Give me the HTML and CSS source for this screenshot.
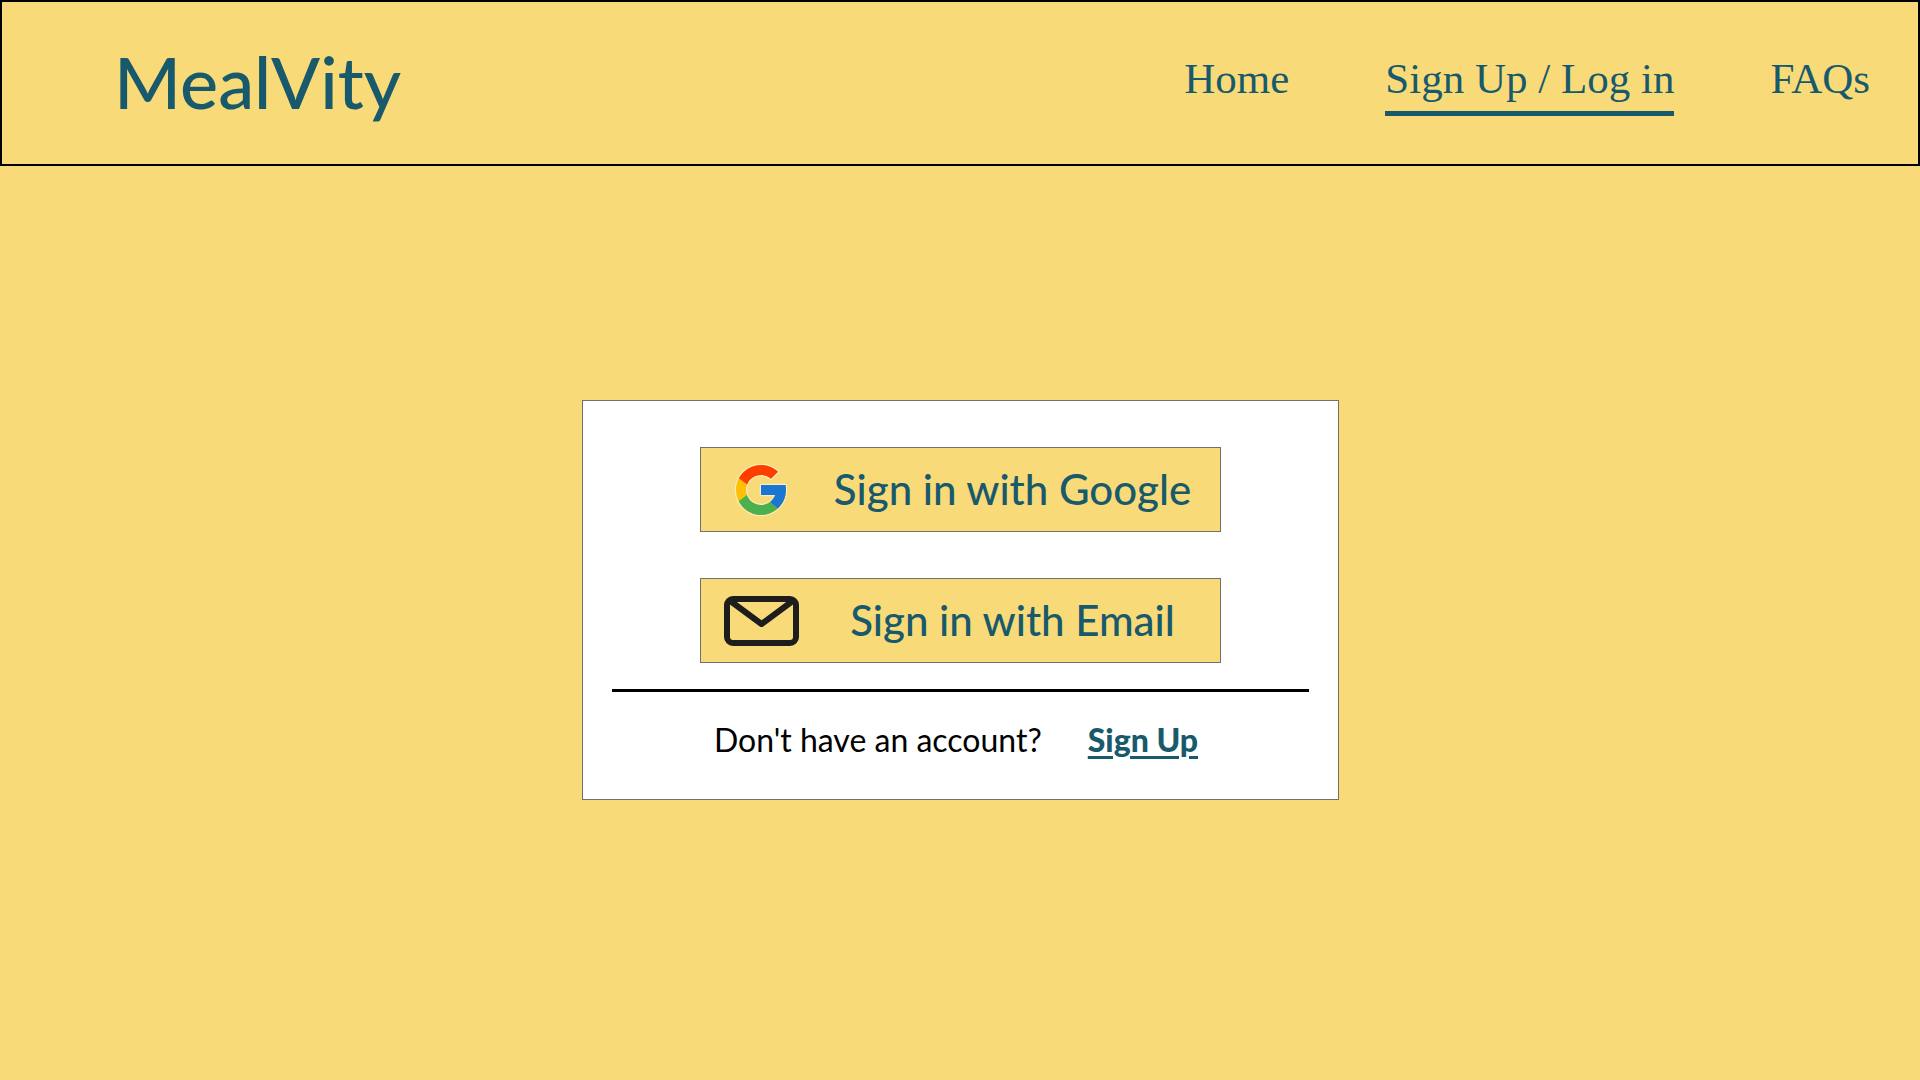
FILE: index.html
```html
<!DOCTYPE html>
<html lang="en">
<head>
  <meta charset="utf-8">
  <meta name="viewport" content="width=device-width, initial-scale=1">
  <title>MealVity - Log in</title>
  <link rel="stylesheet" href="styles.css">
</head>
<body>
  <header class="site-header">
    <a class="logo" href="#">MealVity</a>
    <nav class="site-nav" aria-label="Main">
      <a class="nav-link" href="#">Home</a>
      <a class="nav-link nav-link-current" href="#" aria-current="page">Sign Up / Log in</a>
      <a class="nav-link" href="#">FAQs</a>
    </nav>
  </header>

  <main class="page">
    <section class="card" aria-label="Sign in">
      <div class="providers">
        <button class="provider" type="button">
          <svg class="icon-google" viewBox="0 0 48 48" aria-hidden="true">
            <g class="google-edge">
              <path d="M43.611 20.083H24v8h11.303c-1.649 4.657-6.08 8-11.303 8-6.627 0-12-5.373-12-12s5.373-12 12-12c3.059 0 5.842 1.154 7.961 3.039l5.657-5.657C34.046 6.053 29.268 4 24 4 12.955 4 4 12.955 4 24s8.955 20 20 20 20-8.955 20-20c0-1.341-.138-2.65-.389-3.917z"/>
            </g>
            <path fill="#ffc107" d="M43.611 20.083H42V20H24v8h11.303c-1.649 4.657-6.08 8-11.303 8-6.627 0-12-5.373-12-12s5.373-12 12-12c3.059 0 5.842 1.154 7.961 3.039l5.657-5.657C34.046 6.053 29.268 4 24 4 12.955 4 4 12.955 4 24s8.955 20 20 20 20-8.955 20-20c0-1.341-.138-2.65-.389-3.917z"/>
            <path fill="#ff3d00" d="M6.306 14.691l6.571 4.819C14.655 15.108 18.961 12 24 12c3.059 0 5.842 1.154 7.961 3.039l5.657-5.657C34.046 6.053 29.268 4 24 4 16.318 4 9.656 8.337 6.306 14.691z"/>
            <path fill="#4caf50" d="M24 44c5.166 0 9.86-1.977 13.409-5.192l-6.19-5.238C29.211 35.091 26.715 36 24 36c-5.202 0-9.619-3.317-11.283-7.946l-6.522 5.025C9.505 39.556 16.227 44 24 44z"/>
            <path fill="#1976d2" d="M43.611 20.083H42V20H24v8h11.303c-.792 2.237-2.231 4.166-4.087 5.571l6.193 5.238C36.971 39.205 44 34 44 24c0-1.341-.138-2.65-.389-3.917z"/>
          </svg>
          <span>Sign in with Google</span>
        </button>
        <button class="provider" type="button">
          <svg class="icon-mail" viewBox="0 0 75 50" aria-hidden="true">
            <rect x="3" y="3" width="69" height="44" rx="6"/>
            <path d="M5 4l32.500 24L70 4"/>
          </svg>
          <span>Sign in with Email</span>
        </button>
      </div>
      <hr class="divider">
      <p class="register">
        <span>Don't have an account?</span>
        <a class="register-link" href="#">Sign Up</a>
      </p>
    </section>
  </main>
</body>
</html>
```

FILE: styles.css
```css
:root {
  --sand: #f8da78;
  --teal: #185a6c;
  --line: #707070;
  --sans: Lato, "Noto Sans", sans-serif;
  --serif: "Liberation Serif", serif;
}

* {
  box-sizing: border-box;
}

body {
  margin: 0;
  min-height: 100vh;
  background: var(--sand);
  font-family: var(--sans);
}

.site-header {
  display: flex;
  justify-content: space-between;
  align-items: center;
  gap: 48px;
  padding: 30px 48px 34px 112px;
  border: 2px solid #000;
}

.logo {
  color: var(--teal);
  font-size: 72px;
  font-weight: 500;
  line-height: 98px;
  text-decoration: none;
}

.site-nav {
  display: flex;
  align-items: flex-start;
  gap: 96px;
  font-family: var(--serif);
}

.nav-link {
  color: var(--teal);
  font-size: 43px;
  line-height: 64px;
  text-decoration: none;
}

.nav-link-current {
  border-bottom: 5px solid var(--teal);
}

.page {
  display: flex;
  justify-content: center;
  padding: 234px 24px 48px;
}

.card {
  width: 100%;
  max-width: 757px;
  padding: 46px 29px 37px;
  border: 1px solid var(--line);
  background: #fff;
}

.providers {
  display: grid;
  gap: 46px;
  max-width: 521px;
  margin: 0 auto;
}

.provider {
  display: grid;
  grid-template-columns: 121px 1fr;
  align-items: center;
  justify-items: center;
  padding: 11px 16px 11px 0;
  border: 1px solid var(--line);
  background: var(--sand);
  color: var(--teal);
  font-family: inherit;
  font-size: 42px;
  font-weight: 500;
  line-height: 61px;
  cursor: pointer;
}

.icon-google {
  width: 60px;
  height: 60px;
}

.google-edge {
  fill: none;
  stroke: #fff;
  stroke-opacity: 0.5;
  stroke-width: 2;
}

.icon-mail {
  width: 75px;
  height: 50px;
  fill: none;
  stroke: #1d1d1b;
  stroke-width: 6;
  stroke-linejoin: round;
}

.divider {
  height: 3px;
  margin: 26px 0;
  border: 0;
  background: #000;
}

.register {
  display: flex;
  justify-content: center;
  gap: 46px;
  margin: 0;
  padding-right: 8px;
  font-size: 32px;
  line-height: 44px;
}

.register-link {
  color: var(--teal);
  font-weight: 900;
  text-decoration-thickness: 3px;
  text-underline-offset: 4px;
}
```
